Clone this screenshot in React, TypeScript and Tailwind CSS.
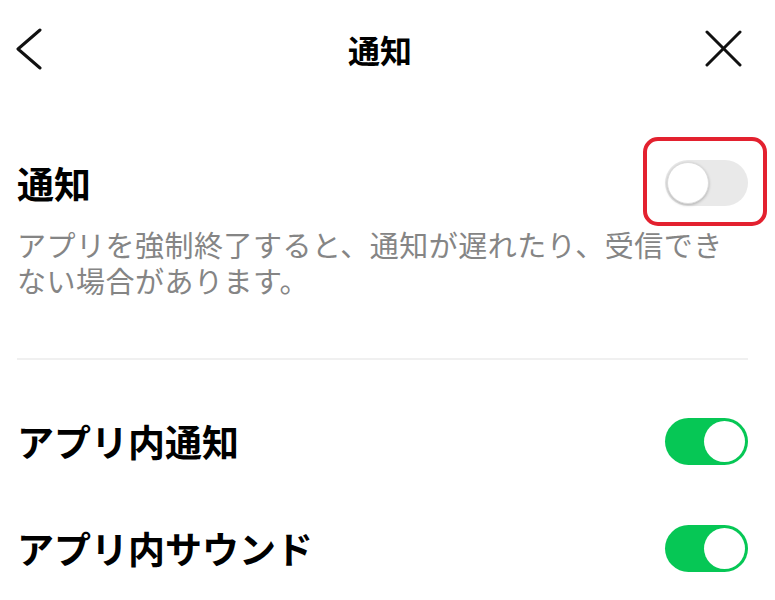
import React from "react";

function Toggle({ on }: { on: boolean }) {
  if (on) {
    return (
      <div className="w-[83px] h-[47px] rounded-full bg-[#06c755] flex items-center justify-end p-[3px]">
        <div className="w-[41px] h-[41px] rounded-full bg-white" />
      </div>
    );
  }
  return (
    <div className="w-[83px] h-[46px] rounded-full bg-[#e9e9e9] flex items-center justify-start p-[2px]">
      <div className="w-[42px] h-[42px] rounded-full bg-white border border-[#dcdcdc] shadow-[0_1px_3px_rgba(0,0,0,0.25)]" />
    </div>
  );
}

export default function App() {
  return (
    <div
      className="w-[775px] h-[600px] bg-white overflow-hidden text-black"
      style={{ fontFamily: '"Noto Sans CJK JP", "Noto Sans", sans-serif' }}
    >
      {/* Header */}
      <div className="h-[97px] flex items-center pl-[15px] pr-[33px]">
        <div className="w-[333px] flex items-center">
          <svg width="28" height="42" viewBox="0 0 28 42" fill="none">
            <polyline
              points="25,2 3,21 25,40"
              stroke="#111"
              strokeWidth="3"
              strokeLinecap="round"
              strokeLinejoin="round"
            />
          </svg>
        </div>
        <div className="text-[32px] font-bold leading-none">通知</div>
        <div className="flex-1 flex justify-end">
          <svg width="37" height="37" viewBox="0 0 37 37" fill="none">
            <line x1="2" y1="2" x2="35" y2="35" stroke="#111" strokeWidth="3" strokeLinecap="round" />
            <line x1="35" y1="2" x2="2" y2="35" stroke="#111" strokeWidth="3" strokeLinecap="round" />
          </svg>
        </div>
      </div>

      {/* Content */}
      <div className="pl-[17px] pr-[27px] pt-[63px]">
        <div className="h-[46px] flex items-center justify-between">
          <div className="text-[37px] font-bold leading-none">通知</div>
          <div className="relative">
            <div className="absolute left-[-22px] right-[-19px] top-[-23px] bottom-[-20px] border-[4px] border-[#e3212f] rounded-[15px]" />
            <Toggle on={false} />
          </div>
        </div>
        <div className="mt-[20px] text-[29px] leading-[36px] tracking-[0.5px] text-[#858585]">
          <div>アプリを強制終了すると、通知が遅れたり、受信でき</div>
          <div>ない場合があります。</div>
        </div>

        <div className="mt-[60px] h-[2px] bg-[#f0f0f0]" />

        <div className="mt-[58px] h-[47px] flex items-center justify-between">
          <div className="text-[37px] font-bold leading-none">アプリ内通知</div>
          <Toggle on={true} />
        </div>

        <div className="mt-[60px] h-[47px] flex items-center justify-between">
          <div className="text-[37px] font-bold leading-none">アプリ内サウンド</div>
          <Toggle on={true} />
        </div>
      </div>
    </div>
  );
}
